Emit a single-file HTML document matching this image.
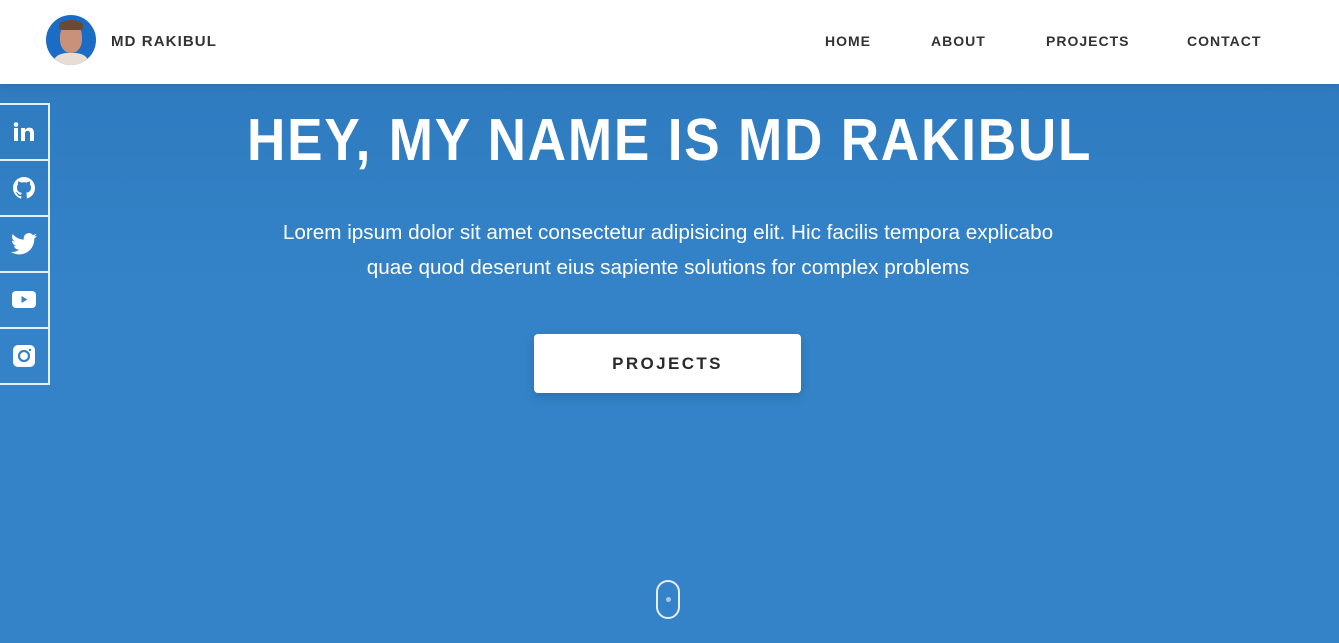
<!DOCTYPE html>
<html><head><style>
*{margin:0;padding:0;box-sizing:border-box}
body{width:1339px;height:643px;overflow:hidden;font-family:"Liberation Sans",sans-serif;background:linear-gradient(#2f7bc0 84px,#3483c8 300px,#3483c8)}
header{position:absolute;top:0;left:0;width:1339px;height:84px;background:#fff;box-shadow:0 2px 6px rgba(0,0,0,.1)}
.av{position:absolute;left:46px;top:15px;width:50px;height:50px;border-radius:50%;background:#1a6cc4;overflow:hidden}
.av .face{position:absolute;left:14px;top:8px;width:22px;height:30px;border-radius:45%;background:#c9917a}
.av .hair{position:absolute;left:13px;top:5px;width:24px;height:10px;border-radius:50% 50% 20% 20%;background:#6b4a35}
.av .body{position:absolute;left:8px;top:38px;width:34px;height:20px;border-radius:40% 40% 0 0;background:#e8ddd5}
.name{position:absolute;left:111px;top:33px;font-weight:bold;font-size:15px;letter-spacing:1.1px;color:#333}
nav a{position:absolute;top:33px;font-weight:bold;font-size:14px;letter-spacing:1px;color:#333;text-decoration:none}
.side{position:absolute;left:0;top:103px;width:50px}
.side div{height:58px;border:2px solid #e8eef5;border-left:none;margin-top:-2px;display:flex;align-items:center;justify-content:center}
.side div:first-child{margin-top:0}
h1{position:absolute;top:106px;left:0;width:1339px;text-align:center;color:#fff;font-size:59px;letter-spacing:2px;white-space:nowrap}
h1 span{display:inline-block;transform:scaleX(.9)}
p{position:absolute;top:215px;left:250px;width:836px;text-align:center;color:#fff;font-size:20.7px;line-height:35px}
.btn{position:absolute;left:534px;top:334px;width:267px;height:59px;background:#fff;border-radius:4px;box-shadow:0 4px 10px rgba(0,0,0,.15);text-align:center;line-height:59px;font-weight:bold;font-size:17px;letter-spacing:2.4px;color:#2a2a2a}
.mouse{position:absolute;left:656px;top:580px;width:24px;height:39px;border:2px solid #e8eef5;border-radius:12px}
.mouse i{position:absolute;left:8px;top:15px;width:5px;height:5px;border-radius:50%;background:#a9c8e8}
</style></head><body>
<header>
<div class="av"><div class="body"></div><div class="face"></div><div class="hair"></div></div>
<div class="name">MD RAKIBUL</div>
<nav><a style="left:825px">HOME</a><a style="left:931px">ABOUT</a><a style="left:1046px">PROJECTS</a><a style="left:1187px">CONTACT</a></nav>
</header>
<div class="side">
<div><svg width="22" height="20" viewBox="0 0 22 20"><rect x="1" y="6" width="4" height="13" fill="#fff"/><circle cx="3" cy="2.5" r="2.3" fill="#fff"/><path d="M8 6h4v2c1-1.6 2.6-2.4 4.4-2.4C19.5 5.6 21 7.6 21 11v8h-4v-7.5c0-1.8-.8-2.7-2.2-2.7S12 9.8 12 11.5V19H8z" fill="#fff"/></svg></div>
<div><svg width="22" height="22" viewBox="0 0 16 16"><path fill="#fff" d="M8 0C3.6 0 0 3.6 0 8c0 3.5 2.3 6.5 5.5 7.6.4.1.5-.2.5-.4v-1.4c-2.2.5-2.7-1-2.7-1-.4-.9-.9-1.2-.9-1.2-.7-.5.1-.5.1-.5.8.1 1.2.8 1.2.8.7 1.3 1.9.9 2.3.7.1-.5.3-.9.5-1.1-1.8-.2-3.6-.9-3.6-4 0-.9.3-1.6.8-2.1-.1-.2-.4-1 .1-2.1 0 0 .7-.2 2.2.8.6-.2 1.3-.3 2-.3s1.4.1 2 .3c1.5-1 2.2-.8 2.2-.8.4 1.1.2 1.9.1 2.1.5.6.8 1.3.8 2.1 0 3.1-1.9 3.7-3.6 3.9.3.3.5.8.5 1.5v2.2c0 .2.1.5.6.4C13.7 14.5 16 11.5 16 8c0-4.4-3.6-8-8-8z"/></svg></div>
<div><svg width="26" height="22" viewBox="0 0 24 20"><path fill="#fff" d="M24 2.4c-.9.4-1.8.7-2.8.8 1-.6 1.8-1.6 2.2-2.7-1 .6-2 1-3.1 1.2C19.3.7 18 0 16.6 0c-2.7 0-4.9 2.2-4.9 4.9 0 .4 0 .8.1 1.1C7.7 5.8 4.1 3.9 1.7.9c-.4.7-.7 1.6-.7 2.5 0 1.7.9 3.2 2.2 4.1-.8 0-1.6-.2-2.2-.6v.1c0 2.4 1.7 4.4 3.9 4.8-.4.1-.8.2-1.3.2-.3 0-.6 0-.9-.1.6 2 2.4 3.4 4.6 3.4-1.7 1.3-3.8 2.1-6.1 2.1H0c2.2 1.4 4.8 2.2 7.5 2.2 9.1 0 14-7.5 14-14v-.6c1-.7 1.8-1.6 2.5-2.6z"/></svg></div>
<div><svg width="24" height="18" viewBox="0 0 24 18"><rect x="0" y="0" width="24" height="17" rx="4" fill="#fff"/><path d="M9.5 5v7l6-3.5z" fill="#3483c8"/></svg></div>
<div><svg width="22" height="22" viewBox="0 0 22 22"><rect x="0" y="0" width="22" height="22" rx="5" fill="#fff"/><circle cx="11" cy="11" r="5" fill="none" stroke="#3483c8" stroke-width="2.2"/><circle cx="17" cy="5" r="1.2" fill="#3483c8"/></svg></div>
</div>
<h1><span>HEY, MY NAME IS MD RAKIBUL</span></h1>
<p>Lorem ipsum dolor sit amet consectetur adipisicing elit. Hic facilis tempora explicabo<br>quae quod deserunt eius sapiente solutions for complex problems</p>
<div class="btn">PROJECTS</div>
<div class="mouse"><i></i></div>
</body></html>
